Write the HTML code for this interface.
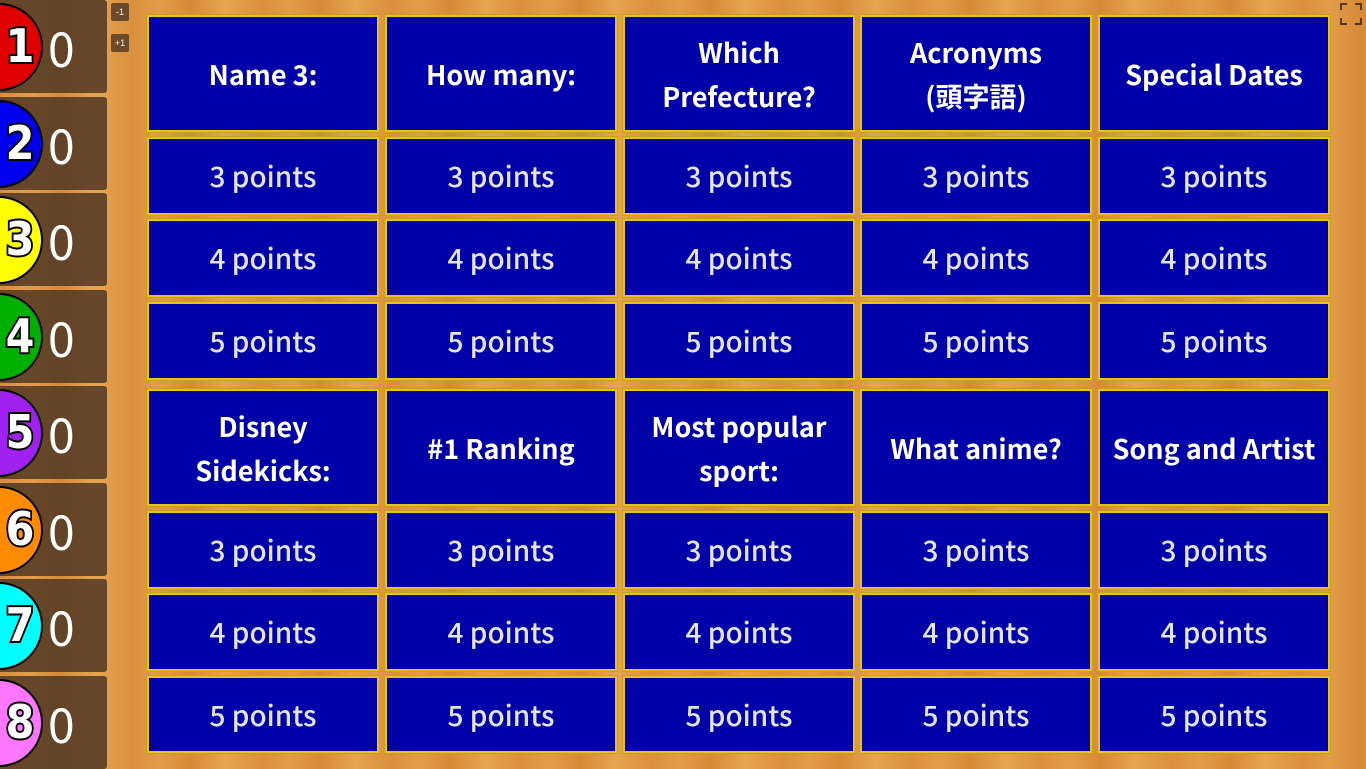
<!DOCTYPE html>
<html><head><meta charset="utf-8"><style>
*{margin:0;padding:0;box-sizing:border-box}
body{width:1366px;height:768px;overflow:hidden;position:relative;font-family:"Liberation Sans","Noto Sans CJK JP",sans-serif;
background:repeating-linear-gradient(90deg,#d98f3c 0,#e39d4a 30px,#d68a36 60px,#e6a451 95px,#db913f 130px);}
.p{position:absolute;left:0;width:107px;height:93px;background:rgba(80,55,35,.85);border-radius:0 3px 3px 0;overflow:hidden}
.c{position:absolute;left:-45px;top:3px;width:88px;height:88px;border-radius:50%;border:2px solid #000}
.n{position:absolute;left:0px;top:14px;width:40px;text-align:center;font:900 46px/64px "DejaVu Sans",sans-serif;color:#fff;-webkit-text-stroke:4px #000;paint-order:stroke fill;transform:scaleX(.9)}
.s{position:absolute;left:48px;top:14px;font-size:48px;color:#fff;line-height:64px;font-family:"Noto Sans CJK JP",sans-serif}
.b{position:absolute;width:18px;height:18px;background:#6a4a2a;color:#eee;font-size:9px;text-align:center;line-height:18px;border-radius:2px;left:111px}
.cell{position:absolute;width:232px;background:#0000a8;border:2px solid #e6c21a;box-shadow:0 0 0 1px #c9a01a;color:#fff;display:flex;align-items:center;justify-content:center;text-align:center;font-family:"Noto Sans CJK JP",sans-serif;font-weight:bold;font-size:27px;line-height:44px}
.pt{font-weight:500;color:#e4e4f0;font-size:28px}
</style></head><body>
<div class="b" style="top:3px">-1</div><div class="b" style="top:34px">+1</div>
<div style="position:absolute;left:1340px;top:3px;width:22px;height:22px;">
<div style="position:absolute;left:0;top:0;width:7px;height:7px;border-left:2px solid #5a3a1a;border-top:2px solid #5a3a1a"></div>
<div style="position:absolute;right:0;top:0;width:7px;height:7px;border-right:2px solid #5a3a1a;border-top:2px solid #5a3a1a"></div>
<div style="position:absolute;left:0;bottom:0;width:7px;height:7px;border-left:2px solid #5a3a1a;border-bottom:2px solid #5a3a1a"></div>
<div style="position:absolute;right:0;bottom:0;width:7px;height:7px;border-right:2px solid #5a3a1a;border-bottom:2px solid #5a3a1a"></div></div>
<div id="sc"></div><div id="g"></div>
<script>
var cols=["#e00000","#0000ee","#ffff00","#00b000","#a020f0","#ff8c00","#00ffff","#ff77ff"],h="";
for(var i=0;i<8;i++){h+='<div class="p" style="top:'+(i*96.5)+'px"><div class="c" style="background:'+cols[i]+'"></div><div class="n">'+(i+1)+'</div><div class="s">0</div></div>';}
document.getElementById("sc").innerHTML=h;
var xs=[147,385,623,860,1098],rows=[[15,117],[137,78],[219,78],[302,78],[389,117],[511,78],[593,78],[676,77]];
var hd=[["Name 3:","How many:","Which<br>Prefecture?","Acronyms<br>(頭字語)","Special Dates"],["Disney<br>Sidekicks:","#1 Ranking","Most popular<br>sport:","What anime?","Song and Artist"]];
var g="";
rows.forEach(function(r,ri){xs.forEach(function(x,ci){var t,cl="cell";var k=ri%4;if(k==0)t=hd[ri>>2][ci];else{t=(k+2)+" points";cl+=" pt";}
g+='<div class="'+cl+'" style="left:'+x+'px;top:'+r[0]+'px;height:'+r[1]+'px">'+t+'</div>';});});
document.getElementById("g").innerHTML=g;
</script>
</body></html>
